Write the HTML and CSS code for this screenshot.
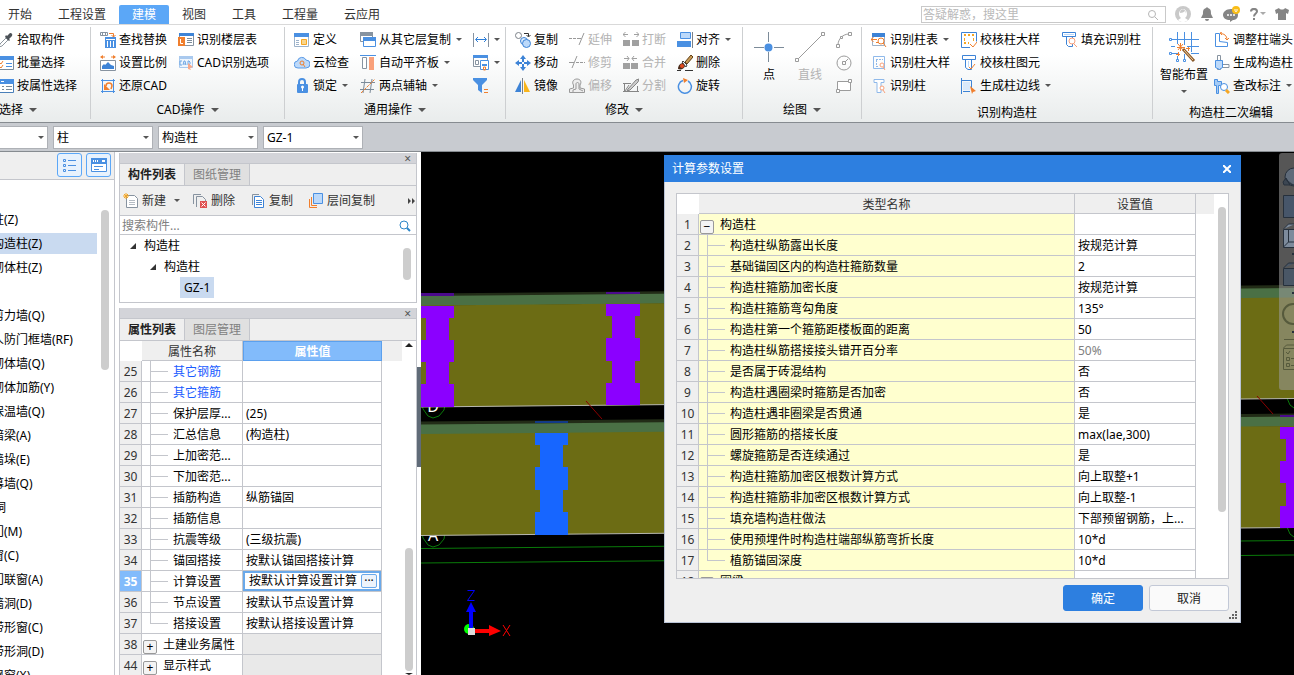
FILE: index.html
```html
<!DOCTYPE html>
<html lang="zh-CN">
<head>
  <meta charset="UTF-8">
  <meta name="viewport" content="width=device-width, initial-scale=1">
  <title>构造柱 - 计算参数设置</title>
  <link rel="stylesheet" href="styles.css">
</head>
<body>

  <header class="topbar">
    <nav class="tabs">
      <button class="tab">开始</button>
      <button class="tab">工程设置</button>
      <button class="tab active">建模</button>
      <button class="tab">视图</button>
      <button class="tab">工具</button>
      <button class="tab">工程量</button>
      <button class="tab">云应用</button>
    </nav>
    <label class="help-search">
      <input type="text" placeholder="答疑解惑，搜这里" aria-label="答疑解惑">
      <svg viewBox="0 0 12 12" width="12" height="12" fill="none" stroke="#b5b5b5"><circle cx="5" cy="5" r="3.5"/><path d="M8 8l3 3"/></svg>
    </label>
    <div class="top-icons">
      <button aria-label="用户"><svg viewBox="0 0 16 16" width="16" height="16"><circle cx="8" cy="8" r="8" fill="#c9c9c9"/><path d="M4 8a4 5 0 0 1 8 0c0 2-1 3-2 4l3 2a7 7 0 0 1-10 0l3-2C5 11 4 10 4 8z" fill="#fff"/><path d="M5 7c2 0 4-1 5-2 0 1 1 2 1 3 0-6-6-6-6-1z" fill="#c9c9c9"/></svg></button>
      <button aria-label="消息"><svg viewBox="0 0 14 14" width="14" height="14" fill="#858585"><path d="M7 0l1 1c3 1 3 3 3 6l2 4H1l2-4c0-3 0-5 3-6zM5 12h4a2 2 0 0 1-4 0z"/></svg></button>
      <button aria-label="反馈"><svg viewBox="0 0 18 16" width="18" height="16"><path d="M8 3c4 0 7 2 7 6s-3 5-5 5l-3 2v-2c-4 0-7-2-7-5s3-6 8-6z" fill="#858585"/><g fill="#fff"><circle cx="5" cy="9" r="1"/><circle cx="8" cy="9" r="1"/><circle cx="11" cy="9" r="1"/></g><circle cx="13" cy="4" r="4" fill="#f9bd16"/><path d="M12 3v1.500a1 1 0 0 0 2 0V3" stroke="#fff" fill="none"/></svg></button>
      <button aria-label="帮助" class="help"><svg viewBox="0 0 8 12" width="8" height="12"><path d="M1 3.500C1 0 7 0 7 3.500 7 5.500 4 5.500 4 8.500M4 10v2" fill="none" stroke="#858585" stroke-width="2"/></svg><i class="caret pale"></i></button>
      <button aria-label="皮肤"><svg viewBox="0 0 14 14" width="14" height="14" fill="#858585"><path d="M4 1c1 2 5 2 6 0l4 2-1 4-2-1v7H3V6L1 7 0 3z"/></svg></button>
      <button aria-label="窗口"><svg viewBox="0 0 12 12" width="12" height="12"><path d="M1 1h10v10H1zM1 3h10" fill="none" stroke="#858585" stroke-width="2"/></svg></button>
    </div>
  </header>

  <section class="ribbon">
    <div class="group g-select">
      <div class="cols">
        <div class="col">
          <button class="cmd"><svg class="ico" viewBox="0 0 16 16"><path d="M1 15l1-3 6-6 2 2-6 6z" fill="#fff" stroke="#8d969e"/><path d="M7 5l4 4 1-1-1-1 3-3a2 2 0 0 0-2-3L9 4 8 3z" fill="#4c5258"/></svg>拾取构件</button>
          <button class="cmd"><svg class="ico" viewBox="0 0 16 16"><path d="M1.500 2.500h14v12h-14z" fill="#fff" stroke="#7c8b99"/><path d="M1 1h15v4H1z" fill="#4a90e2"/><path d="M2 8l1 1 2-3M2 12l1 1 2-3" fill="none" stroke="#f07f2e"/><path d="M8 8.500h6M8 11.500h6" stroke="#4a90e2"/></svg>批量选择</button>
          <button class="cmd"><svg class="ico" viewBox="0 0 16 16"><path d="M1.500 2.500h14v12h-14z" fill="#fff" stroke="#4a7fb9"/><path d="M1 1h15v5H1z" fill="#4a90e2"/><path d="M3 3.500h3" stroke="#fff"/><path d="M4 8.500h2M4 11.500h2M8 8.500h6M8 11.500h6" stroke="#7c8b99"/></svg>按属性选择</button>
        </div>
      </div>
      <button class="group-label">选择<i class="caret big"></i></button>
    </div>

    <div class="group g-cad">
      <div class="cols">
        <div class="col">
          <button class="cmd"><svg class="ico" viewBox="0 0 16 16"><path d="M.5 .5h7v3h-7zM2.500 1v2M5.500 1v2" fill="none" stroke="#8793a0"/><path d="M9 1.500h4.500V5M11.500 3l2 2 2-2" fill="none" stroke="#f07f2e"/><path d="M5 5h11v11H5z" fill="#4a90e2"/><path d="M6 7.500h9M7.500 9v6M10.500 9v6M13.500 9v6" stroke="#fff"/></svg>查找替换</button>
          <button class="cmd"><svg class="ico" viewBox="0 0 16 16"><path d="M1 2h4M11 2h4" stroke="#f07f2e"/><path d="M0 2l3-2v4zM16 2l-3-2v4z" fill="#f07f2e"/><path d="M.5 5.500h15v10H.5z" fill="#fff" stroke="#8793a0"/><path d="M2 14v-3l2-2 1 1 3-3 3 3 3 1v3z" fill="#3d83d6"/></svg>设置比例</button>
          <button class="cmd"><svg class="ico" viewBox="0 0 16 16"><path d="M2.500 1v14M13.500 1v14M1 2.500h14M1 13.500h14" stroke="#4a90e2"/><path d="M6 8c0-4 6-4 6 0l-1 3" fill="none" stroke="#f07f2e" stroke-width="1.500"/><path d="M4 6v6h6z" fill="#f07f2e"/></svg>还原CAD</button>
        </div>
        <div class="col">
          <button class="cmd"><svg class="ico" viewBox="0 0 16 16"><path d="M1.500 1.500h14v12h-14z" fill="#fff" stroke="#8793a0"/><path d="M1 1h15v3H1z" fill="#3d83d6"/><path d="M0 5h7v9H0z" fill="#f07f2e"/><path d="M2.500 7v4.500H5" fill="none" stroke="#fff"/><path d="M9 6.500h5M9 8.500h5M9 10.500h5" stroke="#7c8b99"/></svg>识别楼层表</button>
          <button class="cmd"><svg class="ico" viewBox="0 0 16 16"><path d="M1.500 1.500h13v11h-13z" fill="#eef5fd" stroke="#a9c9ee"/><path d="M1 1h14v3H1z" fill="#a9c9ee"/><path d="M4 6H2v4h2M5 10l1-4h1l1 4M6 9h2M10 6v4h1l1-1V7l-1-1z" fill="none" stroke="#6fa6e3"/><path d="M10 8l5 4-3 1 1 2-3-1z" fill="#f9a98a"/></svg>CAD识别选项</button>
        </div>
      </div>
      <button class="group-label">CAD操作<i class="caret big"></i></button>
    </div>

    <div class="group g-common">
      <div class="cols">
        <div class="col">
          <button class="cmd"><svg class="ico" viewBox="0 0 16 16"><path d="M.5 1.500h14v13H.5z" fill="#fff" stroke="#9db2c9"/><path d="M0 1h15v4H0z" fill="#4a90e2"/><path d="M2 8.500h3M2 10.500h3M2 12.500h3" stroke="#9db2c9"/><path d="M7.500 7.500h5v5h-5z" fill="#f9d58b" stroke="#f5a623"/></svg>定义</button>
          <button class="cmd"><svg class="ico" viewBox="0 0 16 16"><path d="M4 13a3.500 3.500 0 0 1-.5-7 4.500 4.500 0 0 1 8.500-1 4 4 0 0 1 0 8z" fill="#bcd9fa" stroke="#5a9ae6"/><circle cx="8" cy="8" r="2" fill="none" stroke="#f07f2e"/><path d="M9 9l2 3" stroke="#f07f2e"/></svg>云检查</button>
          <button class="cmd"><svg class="ico" viewBox="0 0 16 16"><path d="M5 7V4a3 3 0 0 1 6 0v3" fill="none" stroke="#4a90e2" stroke-width="2"/><rect x="3" y="6" width="11" height="9" rx="1" fill="#4a90e2"/><path d="M8.500 8v5" stroke="#fff" stroke-width="1"/><circle cx="8.500" cy="9" r="1.500" fill="#fff"/></svg>锁定<i class="caret"></i></button>
        </div>
        <div class="col">
          <button class="cmd"><svg class="ico" viewBox="0 0 16 16"><path d="M.5 1.500h12v8H.5z" fill="#fff" stroke="#8793a0"/><path d="M0 0h13v4H0z" fill="#8793a0"/><path d="M3.500 6.500h12v8h-12z" fill="#fff" stroke="#4a90e2"/><path d="M3 5h13v4H3z" fill="#4a90e2"/></svg>从其它层复制<i class="caret"></i></button>
          <button class="cmd"><svg class="ico" viewBox="0 0 16 16"><path d="M0 .5h16" stroke="#4a90e2"/><path d="M2.500 2.500h4v11h-4z" fill="#fff" stroke="#8793a0"/><path d="M9 2h5v13H9z" fill="#f9a07a"/></svg>自动平齐板<i class="caret"></i></button>
          <button class="cmd"><svg class="ico" viewBox="0 0 16 16"><path d="M5 1L3 15M12 1l-2 14M1 4.500h14M0 11.500h14" stroke="#7c8b99" fill="none"/><path d="M1 15L15 1" stroke="#f07f2e" stroke-dasharray="3 1"/></svg>两点辅轴<i class="caret"></i></button>
        </div>
        <div class="col">
          <button class="cmd" aria-label="标注"><svg class="ico" viewBox="0 0 16 16"><path d="M.5 1v14M15.500 1v14" stroke="#8793a0"/><path d="M3 7.500h10M5 5L2.500 7.500 5 10M11 5l2.500 2.500L11 10" fill="none" stroke="#2f7fd8"/></svg><i class="caret"></i></button>
          <button class="cmd" aria-label="保存视图"><svg class="ico" viewBox="0 0 16 16"><path d="M.5 1.500h14v10H.5z" fill="#fff" stroke="#8793a0"/><path d="M0 0h15v3H0z" fill="#4a90e2"/><path d="M2.500 5.500h3v4h-3z" fill="none" stroke="#8793a0"/><path d="M7.500 5.500h8v9h-8z" fill="#fff" stroke="#4a90e2"/><path d="M9 9h5v2H9z" fill="#4a90e2"/><path d="M10.500 12v3h2v-3z" fill="none" stroke="#f07f2e"/></svg><i class="caret"></i></button>
          <button class="cmd" aria-label="过滤"><svg class="ico" viewBox="0 0 16 16"><path d="M0 0h14v2L9 7v8l-4-3V7L0 2z" fill="#4a90e2"/><path d="M11 11.500h4M11 14.500h4" stroke="#f07f2e"/></svg></button>
        </div>
      </div>
      <button class="group-label">通用操作<i class="caret big"></i></button>
    </div>

    <div class="group g-modify">
      <div class="cols">
        <div class="col">
          <button class="cmd"><svg class="ico" viewBox="0 0 16 16"><circle cx="3.500" cy="3.500" r="3" fill="none" stroke="#7b8188"/><path d="M9 1.500h4.500v3M11.500 3l2 2 2-2" fill="none" stroke="#333"/><circle cx="9" cy="9" r="3.500" fill="#dcebfc" stroke="#3d83d6"/><circle cx="11.500" cy="11.500" r="4" fill="#bcd9fa" stroke="#3d83d6"/></svg>复制</button>
          <button class="cmd"><svg class="ico" viewBox="0 0 16 16"><path d="M8 0l3 4H9v3H7V4H5zM8 16l3-4H9V9H7v3H5zM0 8l4-3v2h3v2H4v2zM16 8l-4-3v2H9v2h3v2z" fill="#3d83d6"/></svg>移动</button>
          <button class="cmd"><svg class="ico" viewBox="0 0 16 16"><path d="M0 14L6 2v12z" fill="#3d83d6"/><path d="M7.500 0v16" stroke="#7b8188"/><path d="M15 14L9 2v12z" fill="#f9b51b"/></svg>镜像</button>
        </div>
        <div class="col">
          <button class="cmd" disabled><svg class="ico" viewBox="0 0 16 16" fill="none" stroke="#999"><path d="M0 6.500h9" stroke-dasharray="3 1"/><path d="M9 6.500h3M10 13l5-12"/></svg>延伸</button>
          <button class="cmd" disabled><svg class="ico" viewBox="0 0 16 16" fill="none" stroke="#999"><path d="M0 7.500h5M3 13L8 1"/><path d="M7 7.500h9" stroke-dasharray="3 1"/></svg>修剪</button>
          <button class="cmd" disabled><svg class="ico" viewBox="0 0 16 16" fill="#eee" stroke="#999"><path d="M.5 14.500V11l4-1V7c-2-3 0-6 3.500-6s5 3 3 6v3l4.500 1v3.500z"/><path d="M4 14v-2l3-1V6c0-2 3-2 3 0v5l4 2"/></svg>偏移</button>
        </div>
        <div class="col">
          <button class="cmd" disabled><svg class="ico" viewBox="0 0 16 16" fill="#a0a0a0"><path d="M0 8h7v6H0zM9 8h7v6H9z"/><path d="M0 2.500h5M11 2.500h5M2.500 0L0 2.500 2.500 5M13.500 0L16 2.500 13.500 5" fill="none" stroke="#a0a0a0"/></svg>打断</button>
          <button class="cmd" disabled><svg class="ico" viewBox="0 0 16 16" fill="#a0a0a0"><path d="M0 8h7v6H0zM8 8h7v6H8z"/><path d="M1 3.500h5M9 3.500h5M4 1l2 2.500L4 6M11 1L9 3.500 11 6" fill="none" stroke="#a0a0a0"/></svg>合并</button>
          <button class="cmd" disabled><svg class="ico" viewBox="0 0 16 16" fill="none" stroke="#858585"><path d="M1.500 5v9M14.500 8v6M0 5.500h8M0 13.500h16M2 13l4-6"/><path d="M5 11l8-9 3-1-1 3-8 8-3 1z" fill="#ccc"/></svg>分割</button>
        </div>
        <div class="col">
          <button class="cmd"><svg class="ico" viewBox="0 0 16 16"><path d="M3.500 .5h10v6h-10z" fill="#bcd9fa" stroke="#4a90e2"/><path d="M0 9h14v6H0z" fill="#4a90e2"/><path d="M15.500 0v16" stroke="#7b8188"/></svg>对齐<i class="caret"></i></button>
          <button class="cmd"><svg class="ico" viewBox="0 0 16 16"><path d="M8 7l6-7 2 2-6 7z" fill="#c79a55" stroke="#5f3d14"/><path d="M6 6l4 4-1 2-4-5z" fill="#fff" stroke="#444"/><path d="M1 14c0-4 3-6 5-6l2 3c-1 3-4 4-7 3z" fill="#4a2b1a"/><circle cx="5" cy="11" r="2" fill="#e24a1f"/><path d="M0 15.500h4M8 15.500h8" stroke="#333"/></svg>删除</button>
          <button class="cmd"><svg class="ico" viewBox="0 0 16 16"><path d="M11 3a6.500 6.500 0 1 1-5-.5" fill="none" stroke="#4a90e2" stroke-width="1.500"/><path d="M6 0l5 2-4 3z" fill="#f07f2e"/></svg>旋转</button>
        </div>
      </div>
      <button class="group-label">修改<i class="caret big"></i></button>
    </div>

    <div class="group g-draw">
      <div class="cols">
        <button class="big-cmd"><svg viewBox="0 0 30 30" width="30" height="30"><path d="M14.500 0v10M14.500 20v10M0 15.500h10M20 15.500h10" stroke="#7c8b99"/><circle cx="14.500" cy="15.500" r="4" fill="#4a90e2"/></svg>点</button>
        <button class="big-cmd" disabled><svg viewBox="0 0 30 30" width="30" height="30" fill="#fff" stroke="#9b9b9b"><path d="M2 28L28 2"/><path d="M.5 26.500h3v3h-3zM26.500 .5h3v3h-3z"/></svg>直线</button>
        <div class="col">
          <button class="cmd" disabled aria-label="弧"><svg class="ico" viewBox="0 0 16 16" fill="#fff" stroke="#9b9b9b"><path d="M2 13C2 7 7 2 13 2" fill="none"/><path d="M.5 12.500h3v3h-3zM12.500 .5h3v3h-3zM4.500 4.500h2v2h-2z"/></svg></button>
          <button class="cmd" disabled aria-label="圆"><svg class="ico" viewBox="0 0 16 16" fill="none" stroke="#9b9b9b"><circle cx="8" cy="8" r="7"/><path d="M6.500 6.500h3v3h-3zM9 7l3-3"/></svg></button>
          <button class="cmd" disabled aria-label="矩形"><svg class="ico" viewBox="0 0 16 16" fill="#fff" stroke="#9b9b9b"><path d="M1.500 3.500h13v9h-13z"/><path d="M.5 11.500h3v3h-3zM12.500 1.500h3v3h-3z"/></svg></button>
        </div>
      </div>
      <button class="group-label">绘图<i class="caret big"></i></button>
    </div>

    <div class="group g-identify">
      <div class="cols">
        <div class="col">
          <button class="cmd"><svg class="ico" viewBox="0 0 16 16"><path d="M1.500 1.500h12v12h-12z" fill="#fff" stroke="#9db2c9"/><path d="M1 1h13v4H1z" fill="#3d83d6"/><path d="M0 7.500h6M2.500 5L0 7.500 2.500 10M5 10.500h3" stroke="#f07f2e" fill="none"/><circle cx="10" cy="9" r="3" fill="#fff" stroke="#f07f2e"/><path d="M12 11l3 4" stroke="#f07f2e"/></svg>识别柱表<i class="caret"></i></button>
          <button class="cmd"><svg class="ico" viewBox="0 0 16 16" fill="none"><path d="M2.500 1.500h11v12h-11z" stroke="#8fb9ea"/><path d="M5 4.500h7M5 11.500h3M5.500 5v5" stroke="#8fb9ea" stroke-dasharray="2 1"/><circle cx="11" cy="10" r="2" stroke="#f9a07a" fill="#fff"/><path d="M12 12l2 3" stroke="#f9a07a"/></svg>识别柱大样</button>
          <button class="cmd"><svg class="ico" viewBox="0 0 16 16" fill="#fff"><path d="M3 1.500h10v3h-3v10H6v-10H3z" stroke="#8fb9ea"/><circle cx="11" cy="10" r="2" stroke="#f9a07a"/><path d="M12 12l2 3" stroke="#f9a07a"/></svg>识别柱</button>
        </div>
        <div class="col">
          <button class="cmd"><svg class="ico" viewBox="0 0 16 16" fill="none"><path d="M9 15.500H.5V.5h15v9" stroke="#3d83d6"/><path d="M3 3h10M3 11h5" stroke="#f5a623" stroke-width="2" stroke-dasharray="2"/><path d="M3.500 6v3M12.500 6v3" stroke="#f5a623"/><path d="M9 12l3 3 4-5" stroke="#f07f2e"/></svg>校核柱大样</button>
          <button class="cmd"><svg class="ico" viewBox="0 0 16 16" fill="#fff"><path d="M1.500 .5h13v4h-13zM4.500 4.500h6v10H7l-2.500-2z" stroke="#3d83d6"/><path d="M7.500 6v6" stroke="#bcd9fa"/><path d="M8 12l2 2 4-5" fill="none" stroke="#f07f2e"/></svg>校核柱图元</button>
          <button class="cmd"><svg class="ico" viewBox="0 0 16 16"><path d="M.5 0v16M0 2.500h10.500v8M2 13.500h7" fill="none" stroke="#3d83d6"/><path d="M2 4h7v8H2z" fill="#d9e9fb"/><path d="M9 8l6 5-3 1-1 2z" fill="#f07f2e"/></svg>生成柱边线<i class="caret"></i></button>
        </div>
        <div class="col">
          <button class="cmd"><svg class="ico" viewBox="0 0 16 16" fill="#fff"><path d="M.5 .5h13v4H.5zM4.500 4.500h6v10h-4l-2-2z" stroke="#3d83d6"/><path d="M2 2.500h10" stroke="#bcd9fa"/><circle cx="10" cy="9" r="3" stroke="#f9a07a"/><path d="M12 12l3 3" stroke="#f9a07a"/></svg>填充识别柱</button>
        </div>
      </div>
      <div class="group-label low">识别构造柱</div>
    </div>

    <div class="group g-edit">
      <div class="cols">
        <button class="big-cmd"><svg viewBox="0 0 30 30" width="30" height="30" fill="none"><path d="M2 7.500h28M3 21.500h7M22 21.500h8M2 14.500h4M18 14.500h12M8.500 0v12M15.500 0v13M22.500 0v20M8.500 24v4M15.500 22v6" stroke="#4a90e2"/><g fill="#fff" stroke="#4a90e2"><path d="M.5 6.500h2v2h-2zM.5 20.500h2v2h-2zM7.500 27.500h2v2h-2zM14.500 27.500h2v2h-2z"/></g><path d="M14 17l11 12" stroke="#8a5a2b" stroke-width="3"/><path d="M15 18l9 10" stroke="#f3d0a0"/><path d="M11.500 11v8M8 15.500h8M9 12l5 6M14 12l-5 6M7 22.500h4M9.500 20v4M19.500 15v4M17 16.500h4" stroke="#f07f2e"/></svg>智能布置<i class="caret"></i></button>
        <div class="col">
          <button class="cmd"><svg class="ico" viewBox="0 0 16 16"><path d="M1.500 1.500h4v8l8 1v4h-12z" fill="#fff" stroke="#4a90e2"/><path d="M6 1.500c4 0 7 2 7 6.500M13 8l-2-2M13 8l2-2M6 1l2-1M6 1l2 2" fill="none" stroke="#f07f2e"/></svg>调整柱端头</button>
          <button class="cmd"><svg class="ico" viewBox="0 0 16 16"><path d="M3.500 .5h3v14h-3zM7 9.500h8v3H7z" fill="#fff" stroke="#8793a0"/><path d="M1.500 5.500h7v7l-3 2-4-2z" fill="#bcd9fa" stroke="#4a90e2"/></svg>生成构造柱</button>
          <button class="cmd"><svg class="ico" viewBox="0 0 16 16"><path d="M.5 1.500h3v2h4v4h-3v8h-2v-8h-2z" fill="#a5cbf5" stroke="#4a90e2"/><circle cx="10" cy="9" r="3.500" fill="#fff" stroke="#4a90e2"/><path d="M12 12l3 3" stroke="#f5a623" stroke-width="3"/></svg>查改标注<i class="caret"></i></button>
        </div>
      </div>
      <div class="group-label low">构造柱二次编辑</div>
    </div>
  </section>

  <div class="selectbar">
    <select aria-label="楼层"><option></option></select>
    <select aria-label="构件大类"><option>柱</option></select>
    <select aria-label="构件类型"><option>构造柱</option></select>
    <select aria-label="构件"><option>GZ-1</option></select>
  </div>

  <main class="work">
    <aside class="sidebar">
      <div class="side-tools">
        <button aria-label="列表"><svg viewBox="0 0 16 16" width="16" height="16" fill="none" stroke="#4a90e2"><path d="M1.500 2.500h2v2h-2zM1.500 7.500h2v2h-2zM1.500 12.500h2v2h-2zM6 3.500h8M6 8.500h8M6 13.500h8"/></svg></button>
        <button aria-label="窗口"><svg viewBox="0 0 16 16" width="16" height="16"><path d="M.5 2.500h15v12H.5z" fill="#fff" stroke="#4a90e2"/><path d="M0 1h16v6H0z" fill="#4a90e2"/><path d="M2 4h1M4 4h1M6 4h1M11 4h3" stroke="#fff" stroke-width="2"/><path d="M3 9.500h9M3 12.500h5" stroke="#4a90e2"/></svg></button>
      </div>
      <div class="side-body">
        <ul class="side-list">
          <li>柱(Z)</li>
          <li class="selected">构造柱(Z)</li>
          <li>砌体柱(Z)</li>
          <li class="head"></li>
          <li>剪力墙(Q)</li>
          <li>人防门框墙(RF)</li>
          <li>砌体墙(Q)</li>
          <li>砌体加筋(Y)</li>
          <li>保温墙(Q)</li>
          <li>暗梁(A)</li>
          <li>墙垛(E)</li>
          <li>幕墙(Q)</li>
          <li class="head">门窗洞</li>
          <li>门(M)</li>
          <li>窗(C)</li>
          <li>门联窗(A)</li>
          <li>墙洞(D)</li>
          <li>带形窗(C)</li>
          <li>带形洞(D)</li>
          <li>飘窗(X)</li>
        </ul>
        <div class="thumb side-thumb"></div>
      </div>
    </aside>

    <div class="panels">
      <section class="panel">
        <div class="panel-bar"><button aria-label="关闭">×</button></div>
        <div class="panel-tabs"><button class="active">构件列表</button><button>图纸管理</button></div>
        <div class="panel-tools">
          <button><svg class="ico" viewBox="0 0 16 16"><path d="M3.500 2.500h8l3 3v9h-11z" fill="#fff" stroke="#8793a0"/><path d="M6 7.500h6M6 9.500h6M6 11.500h6" stroke="#b5bcc4"/><path d="M3 0v6M0 3h6M1 1l4 4M5 1L1 5" stroke="#f5a623"/></svg>新建<i class="caret"></i></button>
          <button><svg class="ico" viewBox="0 0 16 16"><path d="M1.500 11V1.500H9M4.500 14V3.500h6l3 3V9" fill="none" stroke="#8793a0"/><path d="M8 8h7v7H8z" fill="#e05252"/><path d="M9.500 9.500l4 4M13.500 9.500l-4 4" stroke="#fff"/></svg>删除</button>
          <button><svg class="ico" viewBox="0 0 16 16"><path d="M2.500 12V1.500H9" fill="none" stroke="#8793a0"/><path d="M4.500 3.500h6l3 3v8h-9z" fill="#fff" stroke="#3d83d6"/><path d="M6 7.500h6M6 9.500h6M6 11.500h6" stroke="#3d83d6"/></svg>复制</button>
          <button><svg class="ico" viewBox="0 0 16 16"><path d="M1.500 6v8.500H9M3.500 4v8.500H9" fill="none" stroke="#f07f2e"/><path d="M5.500 .5h9v10h-9z" fill="#bcd9fa" stroke="#4a90e2"/></svg>层间复制</button>
          <button class="more" aria-label="更多"><svg viewBox="0 0 8 6" width="8" height="6"><path d="M0 0l3 3-3 3zM4 0l3 3-3 3z" fill="#444"/></svg></button>
        </div>
        <label class="find">
          <input type="text" placeholder="搜索构件..." aria-label="搜索构件">
          <svg viewBox="0 0 12 12" width="12" height="12" fill="none" stroke="#2e86c8"><circle cx="5" cy="5" r="4"/><path d="M8 8l3 3" stroke-width="2"/></svg>
        </label>
        <div class="tree">
          <ul>
            <li><i class="open"></i><span>构造柱</span></li>
            <li class="level2"><i class="open"></i><span>构造柱</span></li>
            <li class="level3"><span class="chosen">GZ-1</span></li>
          </ul>
          <div class="thumb tree-thumb"></div>
        </div>
      </section>

      <section class="panel props">
        <div class="panel-bar"><button aria-label="关闭">×</button></div>
        <div class="panel-tabs"><button class="active">属性列表</button><button>图层管理</button></div>
        <div class="grid-box">
          <table class="grid prop-grid">
            <thead><tr><th class="no"></th><th class="name">属性名称</th><th class="val">属性值</th><th class="rest"></th></tr></thead>
            <tbody>
              <tr class="link"><th>25</th><td class="branch">其它钢筋</td><td></td></tr>
              <tr class="link"><th>26</th><td class="branch">其它箍筋</td><td></td></tr>
              <tr><th>27</th><td class="branch">保护层厚...</td><td>(25)</td></tr>
              <tr><th>28</th><td class="branch">汇总信息</td><td>(构造柱)</td></tr>
              <tr><th>29</th><td class="branch">上加密范...</td><td></td></tr>
              <tr><th>30</th><td class="branch">下加密范...</td><td></td></tr>
              <tr><th>31</th><td class="branch">插筋构造</td><td>纵筋锚固</td></tr>
              <tr><th>32</th><td class="branch">插筋信息</td><td></td></tr>
              <tr><th>33</th><td class="branch">抗震等级</td><td>(三级抗震)</td></tr>
              <tr><th>34</th><td class="branch">锚固搭接</td><td>按默认锚固搭接计算</td></tr>
              <tr class="current"><th>35</th><td class="branch">计算设置</td><td class="edit-cell"><div class="editing">按默认计算设置计算<button aria-label="更多设置">···</button></div></td></tr>
              <tr><th>36</th><td class="branch">节点设置</td><td>按默认节点设置计算</td></tr>
              <tr><th>37</th><td class="branch last">搭接设置</td><td>按默认搭接设置计算</td></tr>
              <tr class="folder"><th>38</th><td><button class="box" aria-label="展开">+</button>土建业务属性</td><td></td></tr>
              <tr class="folder"><th>44</th><td><button class="box" aria-label="展开">+</button>显示样式</td><td></td></tr>
            </tbody>
          </table>
          <div class="prop-scroll"><i class="up"></i><div class="thumb"></div><i class="down"></i></div>
        </div>
      </section>
    </div>

    <div class="splitter"><div class="handle"></div></div>

    <section class="canvas">
      <svg class="scene" viewBox="421 152 873 523" preserveAspectRatio="xMinYMin slice">
        <!-- axis marks, partly hidden by the walls -->
        <g fill="none" stroke="#0a7a0a">
          <path d="M422 404l1 5 5 7 5 2 6-2 5-6 1-6M422 533l1 5 5 7 5 2 6-2 5-6 1-6M1287 398l3 7 4 3M1287 527l3 7 4 3"/>
          <path d="M421 548.500L1294 540.500M421 563L1294 555"/>
        </g>
        <g fill="#fff" font-family="Noto Sans" font-size="16" text-anchor="middle"><text x="433" y="412">D</text><text x="433" y="541">A</text></g>

        <!-- upper wall -->
        <path d="M421 293.500L1294 285v4L421 297z" fill="#222c17"/>
        <path d="M421 296L1294 288v10L421 306z" fill="#4a7045"/>
        <path d="M421 305.500L1294 297.500V398.500L421 407z" fill="#6c6c14"/>
        <path d="M421 407L1294 398.500" stroke="#b8b8b0"/>
        <path d="M421 293h33v3h-33zM606 292h34v2h-34z" fill="#4b0a8c"/>
        <path d="M421 306h33v12h-5v22h5v22h-5v22h5v23h-33v-23h5v-22h-5v-22h5v-22h-5z" fill="#8b00ff"/>
        <path d="M606 304h34v12h-5v22h5v23h-5v22h5v22h-34v-22h6v-22h-6v-23h6v-22h-6z" fill="#8b00ff"/>

        <!-- lower wall -->
        <path d="M421 421.500L1294 413.500v4L421 426z" fill="#222c17"/>
        <path d="M421 424.500L1294 416.500v10L421 435z" fill="#4a7045"/>
        <path d="M421 434L1294 426V527.500L421 535.500z" fill="#6c6c14"/>
        <path d="M421 535.500L1294 527.500" stroke="#b8b8b0"/>
        <path d="M535 421h33v2h-33z" fill="#123a86"/>
        <path d="M535 433h33v12h-5v22h5v23h-5v22h5v23h-33v-23h5v-22h-5v-23h5v-22h-5z" fill="#1766ff"/>
        <path d="M1280 415h14v2h-14z" fill="#4b0a8c"/>
        <path d="M1280 427h14v101h-14v-22h6v-23h-6v-22h6v-22h-6z" fill="#8b00ff"/>
        <path d="M586 401l16 18M1257 396l16 18" stroke="#8b0000"/>

        <!-- coordinate axes -->
        <circle cx="469" cy="629" r="5" fill="#0f0"/>
        <path d="M469 628V612h-3l5-10 5 10h-3v16z" fill="#00f"/>
        <path d="M474 629h15v-4l12 6-12 5v-3h-15z" fill="#f00"/>
        <path d="M468 628h7v7h-7z" fill="#ddd"/>
        <path d="M467.500 590.500h7l-7 10h7" fill="none" stroke="#00f"/>
        <path d="M503 625l7 11M510 625l-7 11" stroke="#f00"/>
      </svg>

      <div class="view-tools">
        <svg viewBox="0 0 15 237" width="15" height="237" fill="none" stroke="#26303c">
          <circle cx="15" cy="24" r="9" fill="#5f6b7a"/><path d="M4 29l3-4 4 7H5zM7 26c2 4 5 6 8 6" fill="#3c4652"/>
          <path d="M4.500 42.500H16v22H4.500z" fill="#47566a"/>
          <path d="M4.500 76.500H16v18H4.500zM4.500 76l5-5H16" fill="#7d8b9c"/><path d="M9.500 76v13H16M4.500 94l5-5"/>
          <path d="M4.500 115.500H16v17H4.500zM4.500 115l5-5H16" fill="#4a5766"/>
          <circle cx="14" cy="161" r="10" stroke="#565a3c" stroke-width="2"/>
          <path d="M5 186.500h10M4.500 195.500H16v21H4.500zM4.500 195l3-3H15M7 199l2 2 2-3M7.500 204.500h3v3h-3zM7.500 210.500h3v3h-3zM12 205.500h3M12 212.500h3" stroke="#565a3c"/>
          <path d="M13 101h3M13 140h3M13 179h3" stroke-width="2"/>
        </svg>
      </div>

      <div class="dialog" role="dialog" aria-label="计算参数设置">
        <div class="dialog-title"><span>计算参数设置</span><button aria-label="关闭"><svg viewBox="0 0 8 8" width="8" height="8"><path d="M0 0l8 8M8 0L0 8" stroke="#fff" stroke-width="2"/></svg></button></div>
        <div class="dialog-body">
          <div class="grid-box calc-box">
            <table class="grid calc-grid">
              <thead><tr><th class="no"></th><th class="name">类型名称</th><th class="val">设置值</th><th class="rest"></th></tr></thead>
              <tbody>
                <tr><th>1</th><td><button class="box" aria-label="折叠">−</button>构造柱</td><td></td></tr>
                <tr><th>2</th><td class="branch">构造柱纵筋露出长度</td><td>按规范计算</td></tr>
                <tr><th>3</th><td class="branch">基础锚固区内的构造柱箍筋数量</td><td>2</td></tr>
                <tr><th>4</th><td class="branch">构造柱箍筋加密长度</td><td>按规范计算</td></tr>
                <tr><th>5</th><td class="branch">构造柱箍筋弯勾角度</td><td>135°</td></tr>
                <tr><th>6</th><td class="branch">构造柱第一个箍筋距楼板面的距离</td><td>50</td></tr>
                <tr class="dim"><th>7</th><td class="branch">构造柱纵筋搭接接头错开百分率</td><td>50%</td></tr>
                <tr><th>8</th><td class="branch">是否属于砖混结构</td><td>否</td></tr>
                <tr><th>9</th><td class="branch">构造柱遇圈梁时箍筋是否加密</td><td>否</td></tr>
                <tr><th>10</th><td class="branch">构造柱遇非圈梁是否贯通</td><td>是</td></tr>
                <tr><th>11</th><td class="branch">圆形箍筋的搭接长度</td><td>max(lae,300)</td></tr>
                <tr><th>12</th><td class="branch">螺旋箍筋是否连续通过</td><td>是</td></tr>
                <tr><th>13</th><td class="branch">构造柱箍筋加密区根数计算方式</td><td>向上取整+1</td></tr>
                <tr><th>14</th><td class="branch">构造柱箍筋非加密区根数计算方式</td><td>向上取整-1</td></tr>
                <tr><th>15</th><td class="branch">填充墙构造柱做法</td><td>下部预留钢筋，上...</td></tr>
                <tr><th>16</th><td class="branch">使用预埋件时构造柱端部纵筋弯折长度</td><td>10*d</td></tr>
                <tr><th>17</th><td class="branch last">植筋锚固深度</td><td>10*d</td></tr>
                <tr><th>18</th><td><button class="box" aria-label="折叠">−</button>圈梁</td><td></td></tr>
              </tbody>
            </table>
            <div class="thumb calc-thumb"></div>
          </div>
          <div class="actions">
            <button class="primary">确定</button>
            <button>取消</button>
          </div>
        </div>
        <svg class="grip" viewBox="0 0 8 8" width="8" height="8" fill="#666"><path d="M6 0h2v2H6zM3 3h2v2H3zM6 3h2v2H6zM0 6h2v2H0zM3 6h2v2H3zM6 6h2v2H6z"/></svg>
      </div>
    </section>
  </main>

</body>
</html>
```
FILE: styles.css
```css
* {
  box-sizing: border-box;
}

body {
  margin: 0;
  height: 100vh;
  display: flex;
  flex-direction: column;
  overflow: hidden;
  background: #fff;
  color: #000;
  font-family: "Noto Sans", "Noto Sans CJK SC", sans-serif;
  font-size: 12px;
  line-height: 18px;
  white-space: nowrap;
}

button, input, select {
  font: inherit;
  color: inherit;
  margin: 0;
  padding: 0;
  border: none;
  background: none;
  white-space: nowrap;
}

ul {
  list-style: none;
  margin: 0;
  padding: 0;
}

svg {
  display: block;
  flex: none;
}

.ico {
  width: 16px;
  height: 16px;
}

.caret {
  flex: none;
  margin-left: 2px;
  border: 3px solid transparent;
  border-top-color: #555;
  border-bottom: none;
}

.caret.big {
  margin-left: 3px;
  border-width: 4px;
  border-bottom: none;
}

.caret.pale {
  border-top-color: #aaa;
}

.thumb {
  width: 8px;
  border-radius: 4px;
  background: #cdcdcd;
}

/* top bar */
.topbar {
  height: 25px;
  flex: none;
  display: flex;
  align-items: flex-end;
  border-bottom: 1px solid #d9d9d9;
}

.tabs {
  display: flex;
  margin-left: -5px;
  margin-right: auto;
}

.tab {
  height: 19px;
  padding: 1px 13px 0;
  color: #333;
}

.tab.active {
  background: #5ba7f7;
  color: #fff;
  border-radius: 2px 2px 0 0;
}

.help-search {
  width: 245px;
  height: 17px;
  display: flex;
  align-items: center;
  padding: 0 6px 0 1px;
  margin: 0 9px 1px 0;
  border: 1px solid #c9c9c9;
}

.help-search input {
  flex: 1;
  min-width: 0;
  height: 15px;
  outline: none;
}

.help-search input::placeholder {
  color: #b9b9b9;
}

.top-icons {
  display: flex;
  align-items: center;
  gap: 9px;
  height: 21px;
  margin-right: -16px;
}

.top-icons .help {
  display: flex;
  align-items: center;
}

/* ribbon */
.ribbon {
  height: 98px;
  flex: none;
  display: flex;
  overflow: hidden;
  background: linear-gradient(#fff 30%, #e9ecec);
  border-bottom: 1px solid #868b90;
}

.group {
  flex: none;
  display: flex;
  flex-direction: column;
  margin: 2px 0 3px;
  padding: 1px 9px 0;
  border-right: 1px solid #cdcfd1;
}

.cols {
  display: flex;
  gap: 11px;
  height: 69px;
}

.col {
  display: flex;
  flex-direction: column;
}

.cmd {
  height: 23px;
  display: flex;
  align-items: center;
  gap: 3px;
}

.cmd:disabled, .big-cmd:disabled {
  color: #b3b3b3;
}

.big-cmd {
  display: flex;
  flex-direction: column;
  align-items: center;
  padding-top: 4px;
  gap: 4px;
}

.big-cmd .caret {
  margin: 2px 0 0;
}

.group-label {
  height: 24px;
  display: flex;
  align-items: center;
  justify-content: center;
  gap: 3px;
  padding-top: 3px;
}

.group-label.low {
  padding-top: 7px;
}

.g-select {
  width: 91px;
  padding-left: 0;
}

.g-select .cols {
  margin-left: -2px;
}

.g-select .group-label {
  justify-content: flex-start;
  margin-left: -1px;
}

.g-cad {
  width: 194px;
}

.g-common {
  width: 221px;
}

.g-modify {
  width: 237px;
}

.g-draw {
  width: 119px;
  padding-left: 11px;
}

.g-draw .group-label {
  margin-right: 2px;
}

.g-identify {
  width: 291px;
}

.g-edit {
  padding: 1px 0 0 7px;
  border-right: none;
}

.g-edit .cols {
  gap: 6px;
  margin-right: 9px;
}

/* drop-downs under the ribbon */
.selectbar {
  height: 29px;
  flex: none;
  display: flex;
  align-items: center;
  gap: 5px;
  margin-left: -52px;
  padding-top: 1px;
  background: #c8cbd0;
  border-bottom: 1px solid #868b90;
}

.selectbar select {
  width: 100px;
  height: 23px;
  padding: 0 3px;
  appearance: none;
  border: 1px solid #aeb1b6;
  background: #fff url("data:image/svg+xml,%3Csvg xmlns='http://www.w3.org/2000/svg' width='6' height='4'%3E%3Cpath d='M0 0h6L3 3z' fill='%23555'/%3E%3C/svg%3E") no-repeat right 3px center;
}

/* work area */
.work {
  flex: 1;
  min-height: 0;
  display: flex;
}

.sidebar {
  width: 115px;
  flex: none;
  display: flex;
  flex-direction: column;
  overflow: hidden;
  border-right: 1px solid #c4c6cc;
}

.side-tools {
  height: 28px;
  flex: none;
  display: flex;
  justify-content: flex-end;
  align-items: center;
  gap: 4px;
  padding: 0 3px 2px 0;
  background: #efefef;
  border-bottom: 1px solid #c4c6cc;
}

.side-tools button {
  width: 25px;
  height: 24px;
  display: grid;
  place-items: center;
  background: #e8f2fd;
  border: 1px solid #5ba7f7;
  border-radius: 3px;
}

.side-body {
  display: flex;
  justify-content: space-between;
  padding-right: 5px;
}

.side-list {
  width: 97px;
  padding-top: 29px;
}

.side-list li {
  height: 21px;
  margin-bottom: 3px;
  line-height: 21px;
  text-indent: -8px;
}

.side-list .head {
  text-indent: -30px;
}

.side-list .selected {
  background: #c9daf0;
}

.side-thumb {
  height: 160px;
  margin-top: 30px;
}

.panels {
  width: 302px;
  flex: none;
  display: flex;
  flex-direction: column;
  gap: 5px;
  padding: 1px 0 0 4px;
}

.panel {
  border: 1px solid #c4c6cc;
  border-top: none;
  flex: none;
}

.props {
  flex: 1;
  min-height: 0;
  display: flex;
  flex-direction: column;
  border-bottom: none;
}

.panel-bar {
  height: 11px;
  flex: none;
  display: flex;
  justify-content: flex-end;
  align-items: center;
  padding: 1px 5px 0 0;
  background: #d3d4d9;
  border-bottom: 1px solid #c4c6cc;
  color: #555;
  line-height: 10px;
}

.panel-tabs {
  height: 22px;
  flex: none;
  display: flex;
  background: #efefef;
  border-bottom: 1px solid #c4c6cc;
}

.panel-tabs button {
  width: 65px;
  background: #e0e0e0;
  border-right: 1px solid #c4c6cc;
  color: #808080;
}

.panel-tabs .active {
  background: #efefef;
  color: #222;
  font-weight: bold;
}

.panel-tools {
  height: 30px;
  display: flex;
  align-items: center;
  gap: 15px;
  padding: 0 0 0 3px;
  background: #efefef;
  border-bottom: 1px solid #c4c6cc;
  color: #333;
}

.panel-tools button {
  display: flex;
  align-items: center;
  gap: 3px;
}

.panel-tools .caret {
  margin-left: 5px;
  margin-right: -3px;
}

.panel-tools .more {
  margin-left: auto;
}

.find {
  height: 19px;
  display: flex;
  align-items: center;
  padding: 1px 5px 0 2px;
  border-bottom: 1px solid #c4c6cc;
}

.find input {
  flex: 1;
  min-width: 0;
  outline: none;
}

.find input::placeholder {
  color: #808080;
}

.tree {
  height: 67px;
  display: flex;
  justify-content: space-between;
  padding-right: 5px;
}

.tree li {
  height: 21px;
  display: flex;
  align-items: center;
  gap: 8px;
  padding-left: 10px;
}

.tree .level2 {
  padding-left: 30px;
}

.tree .level3 {
  padding-left: 60px;
}

.tree .open {
  border-left: 6px solid transparent;
  border-bottom: 6px solid #333;
}

.tree .chosen {
  padding: 0 4px;
  line-height: 21px;
  background: #c9daf0;
}

.tree-thumb {
  height: 32px;
  margin-top: 13px;
}

/* grids */
.grid-box {
  display: flex;
  overflow: hidden;
  background: #fff;
}

.grid {
  border-collapse: separate;
  border-spacing: 0;
  table-layout: fixed;
  flex: none;
}

.grid th, .grid td {
  height: 21px;
  padding: 2px 0 0;
  line-height: 18px;
  border-right: 1px solid #c4c6cc;
  border-bottom: 1px solid #c4c6cc;
  font-weight: normal;
  text-align: left;
  overflow: hidden;
}

.grid td {
  padding-left: 3px;
}

.grid tbody th {
  text-align: center;
  background: #efefef;
  color: #333;
}

.grid thead th {
  height: 20px;
  line-height: 17px;
  text-align: center;
  background: #efefef;
  color: #333;
}

.grid thead .no {
  background: #fff;
  border-color: #fff;
}

.grid thead .rest {
  border-color: #efefef;
}

.grid .branch {
  padding-left: 31px;
  background-image: linear-gradient(#c4c6cc, #c4c6cc), linear-gradient(#c4c6cc, #c4c6cc);
  background-repeat: no-repeat;
  background-position: 8px 0, 8px 10px;
  background-size: 1px 100%, 18px 1px;
}

.grid .last {
  background-size: 1px 10px, 18px 1px;
}

.box {
  display: inline-block;
  width: 14px;
  height: 14px;
  margin: 0 6px 0 -2px;
  border: 1px solid #999;
  border-radius: 2px;
  background: #f4f4f4;
  line-height: 12px;
  text-align: center;
  vertical-align: -2px;
  overflow: hidden;
}

.prop-grid {
  width: 282px;
}

.props .grid-box {
  flex: 1;
  min-height: 0;
  justify-content: space-between;
}

.prop-grid .no {
  width: 22px;
}

.prop-grid .name {
  width: 101px;
}

.prop-grid .val {
  width: 139px;
}

.prop-grid thead .val {
  padding-top: 1px;
  background: #82bbfb;
  border: 1px solid #5ba0ee;
  color: #fff;
  font-weight: bold;
}

.prop-grid .link td {
  color: #1a5cff;
}

.prop-grid .current th {
  background: #82bbfb;
  color: #fff;
  font-weight: bold;
}

.grid .edit-cell {
  padding: 0;
}

.editing {
  height: 20px;
  display: flex;
  align-items: center;
  justify-content: space-between;
  padding: 0 2px 0 4px;
  border: 2px solid #6aa9ea;
}

.editing button {
  width: 16px;
  height: 14px;
  border: 1px solid #6aa9ea;
  border-radius: 2px;
  background: #eef4fb;
  line-height: 10px;
}

.prop-grid .folder td:last-child {
  background: #e9e9e9;
}

.prop-scroll {
  width: 14px;
  display: flex;
  flex-direction: column;
  align-items: center;
  justify-content: flex-end;
  padding-top: 2px;
}

.prop-scroll .up {
  margin-bottom: auto;
  border: 4px solid transparent;
  border-bottom-color: #222;
  border-top: none;
}

.prop-scroll .down {
  margin-top: 2px;
  border: 4px solid transparent;
  border-top: 2px solid #222;
  border-bottom: none;
}

.prop-scroll .thumb {
  height: 123px;
}

.splitter {
  width: 4px;
  flex: none;
  padding-top: 215px;
}

.handle {
  height: 100px;
  background: #606b78;
}

/* 3D view */
.canvas {
  flex: 1;
  min-width: 0;
  position: relative;
  overflow: hidden;
  background: #000;
}

.scene {
  width: 100%;
  height: 100%;
}

.view-tools {
  position: absolute;
  top: 1px;
  right: 0;
  background: rgba(156, 156, 156, .55);
  border-radius: 3px 0 0 3px;
}

/* dialog */
.dialog {
  position: absolute;
  top: 3px;
  left: 243px;
  width: 577px;
  background: #efefef;
  border: 1px solid #b9c3d6;
  border-top: none;
}

.dialog-title {
  height: 27px;
  display: flex;
  align-items: center;
  justify-content: space-between;
  margin: 0 -1px;
  padding: 0 10px 0 8px;
  background: #2d7fe0;
  color: #fff;
}

.dialog-body {
  padding: 11px;
}

.calc-box {
  height: 386px;
  justify-content: space-between;
  padding-right: 2px;
  border: 1px solid #c4c6cc;
}

.calc-grid {
  width: 537px;
}

.calc-grid .no {
  width: 22px;
}

.calc-grid .name {
  width: 376px;
}

.calc-grid .val {
  width: 121px;
}

.calc-grid td:nth-child(2) {
  background-color: #ffffcf;
}

.calc-grid .dim td:last-child {
  color: #808080;
}

.calc-thumb {
  height: 305px;
  margin-top: 13px;
}

.actions {
  display: flex;
  justify-content: flex-end;
  gap: 6px;
  padding-top: 6px;
}

.actions button {
  width: 80px;
  height: 26px;
  padding-top: 1px;
  border: 1px solid #c2c8d6;
  border-radius: 3px;
  background: #fafafa;
  color: #222;
}

.actions .primary {
  background: #2d7fe0;
  border-color: #2d7fe0;
  color: #fff;
}

.grip {
  position: absolute;
  right: 3px;
  bottom: 3px;
}
```
